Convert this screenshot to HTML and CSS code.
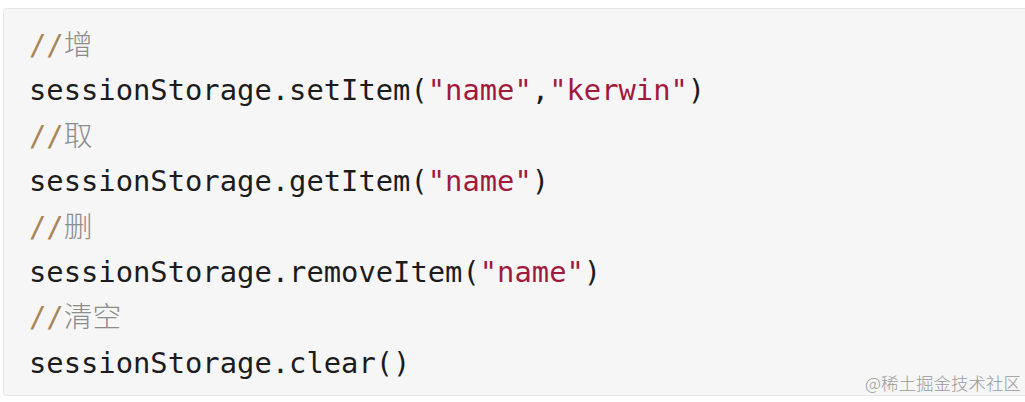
FILE: index.html
```html
<!DOCTYPE html>
<html>
<head>
<meta charset="utf-8">
<link rel="stylesheet" href="styles.css">
</head>
<body>
<div class="code-box">
<pre class="code"><span class="c"><span class="sl">//</span>增</span>
sessionStorage.setItem(<span class="s">"name"</span>,<span class="s">"kerwin"</span>)
<span class="c"><span class="sl">//</span>取</span>
sessionStorage.getItem(<span class="s">"name"</span>)
<span class="c"><span class="sl">//</span>删</span>
sessionStorage.removeItem(<span class="s">"name"</span>)
<span class="c"><span class="sl">//</span>清空</span>
sessionStorage.clear()</pre>
<div class="watermark">@稀土掘金技术社区</div>
</div>
</body>
</html>
```
FILE: styles.css
```css
html, body {
  margin: 0;
  padding: 0;
  background: #ffffff;
}
body {
  width: 1025px;
  height: 402px;
  overflow: hidden;
}
.code-box {
  position: relative;
  margin: 8px 0 0 3px;
  width: 1030px;
  height: 388px;
  box-sizing: border-box;
  border: 1px solid #e6e6e6;
  border-radius: 3px;
  background: #f6f6f7;
  padding: 14px 0 0 25px;
}
.code {
  margin: 0;
  font-family: "DejaVu Sans Mono", "Noto Sans CJK SC", monospace;
  font-size: 28.8px;
  line-height: 45.4px;
  color: #1c1c1c;
}
.c {
  color: #8c8c8c;
  font-weight: 300;
}
.sl {
  color: #a98558;
}
.s {
  color: #a11a3c;
}
.watermark {
  position: absolute;
  right: 11px;
  bottom: 0;
  font-family: "Noto Sans CJK SC", sans-serif;
  font-weight: 300;
  font-size: 17.5px;
  color: #9a9a9a;
}
```
